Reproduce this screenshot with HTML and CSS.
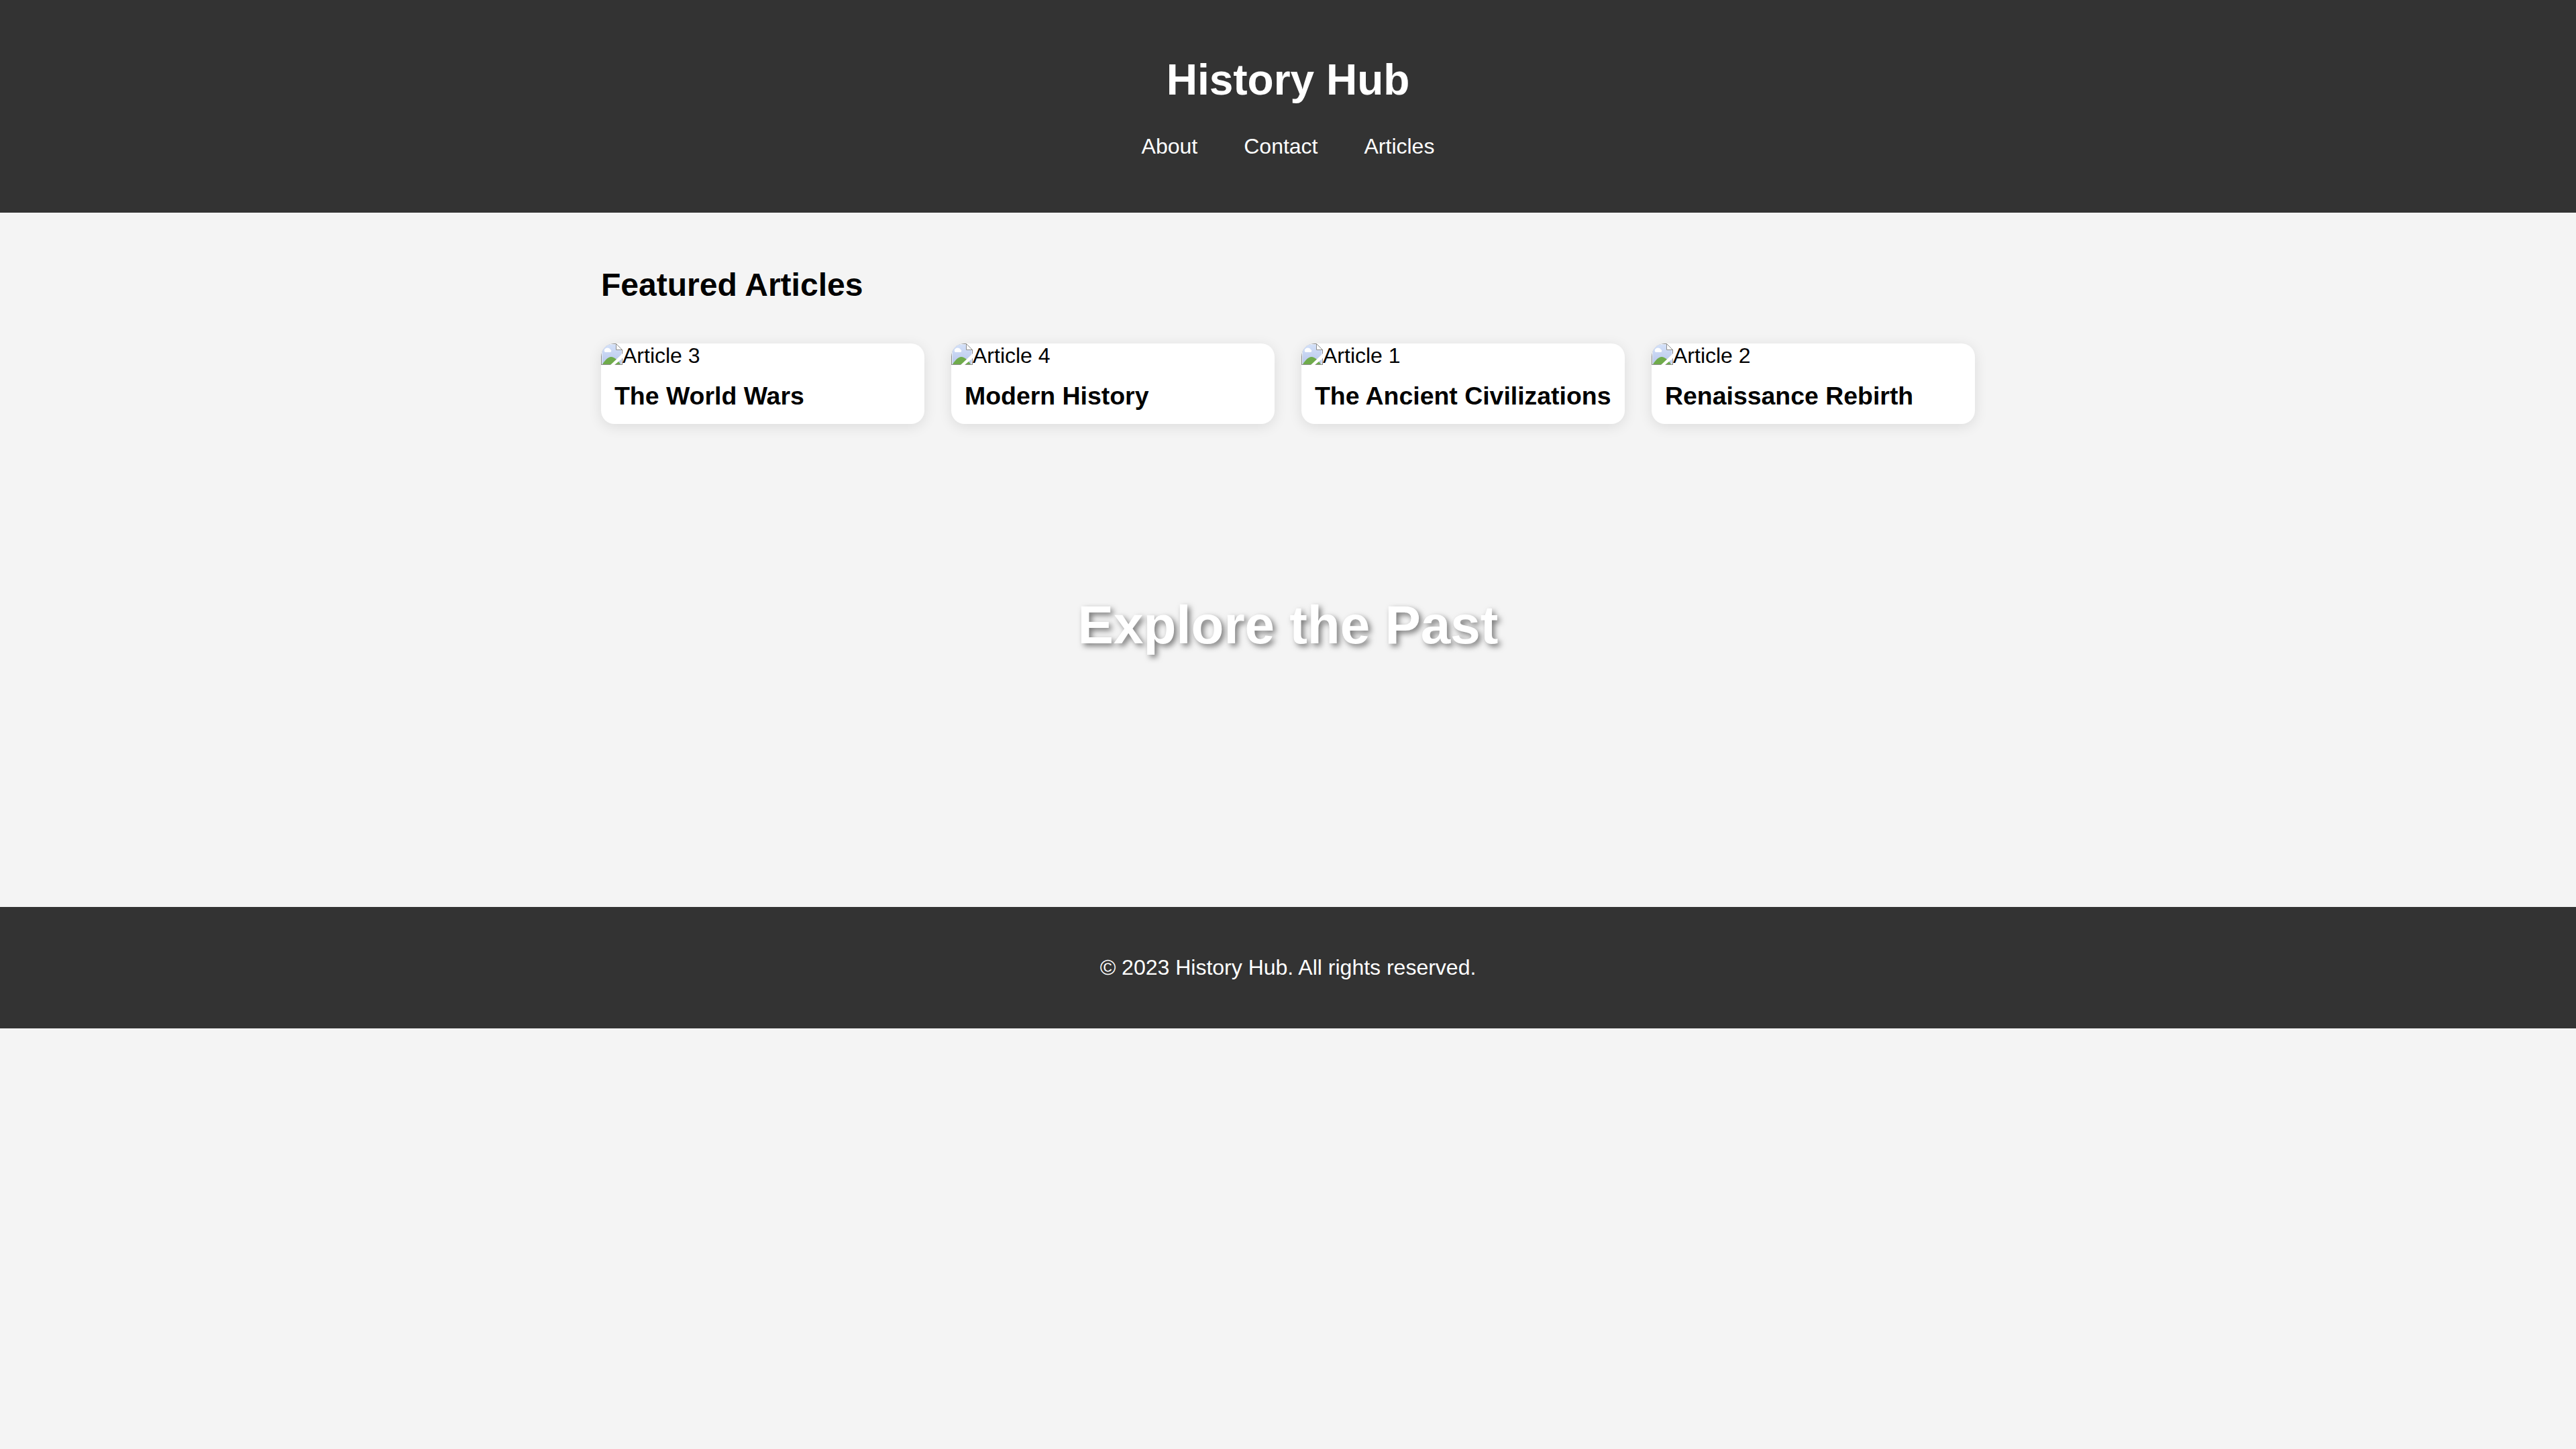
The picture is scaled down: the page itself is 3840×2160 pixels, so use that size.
FILE: index.html
```html
<!DOCTYPE html>
<html lang="en">
<head>
<meta charset="utf-8">
<meta name="viewport" content="width=device-width, initial-scale=1">
<title>History Hub</title>
<link rel="stylesheet" href="styles.css">
</head>
<body>
<svg class="defs" aria-hidden="true">
  <defs>
    <linearGradient id="sky" x1="0" y1="0" x2="0" y2="1">
      <stop offset="0" stop-color="#d3e0f8"/>
      <stop offset="1" stop-color="#b9c8ec"/>
    </linearGradient>
    <symbol id="picture" viewBox="0 0 32 32">
      <path d="M0 0H23L32 9V32H0Z" fill="#8c8c8c"/>
      <path d="M1 1H22L31 10V31H1Z" fill="#e6edfb"/>
      <path d="M2 2H22V10H30V30H2Z" fill="url(#sky)"/>
      <path d="M2 31C6 25 10 20 15 20C20 20 25 25 29 31Z" fill="#6fab4b"/>
      <path d="M6 13A3 3 0 0 1 5.500 8.500A5 4.500 0 0 1 14 9A2.200 2.200 0 0 1 14 13Z" fill="#fff"/>
      <path d="M22 0V9H32V0Z" fill="#fff"/>
      <path d="M22.500 .5V9.500H31.500M22.500 .5L31.500 9.500" fill="none" stroke="#8c8c8c"/>
      <path d="M14 32L32 15V22L20 32Z" fill="#fff"/>
    </symbol>
  </defs>
</svg>
<header class="site-header">
  <h1 class="site-title">History Hub</h1>
  <nav class="site-nav">
    <a href="#about">About</a>
    <a href="#contact">Contact</a>
    <a href="#articles">Articles</a>
  </nav>
</header>
<main>
  <section class="featured" id="articles">
    <h2 class="featured-title">Featured Articles</h2>
    <div class="cards">
      <article class="card">
        <div class="card-image"><svg class="icon" aria-hidden="true"><use href="#picture"/></svg><span>Article 3</span></div>
        <h3 class="card-title">The World Wars</h3>
      </article>
      <article class="card">
        <div class="card-image"><svg class="icon" aria-hidden="true"><use href="#picture"/></svg><span>Article 4</span></div>
        <h3 class="card-title">Modern History</h3>
      </article>
      <article class="card">
        <div class="card-image"><svg class="icon" aria-hidden="true"><use href="#picture"/></svg><span>Article 1</span></div>
        <h3 class="card-title">The Ancient Civilizations</h3>
      </article>
      <article class="card">
        <div class="card-image"><svg class="icon" aria-hidden="true"><use href="#picture"/></svg><span>Article 2</span></div>
        <h3 class="card-title">Renaissance Rebirth</h3>
      </article>
    </div>
  </section>
  <section class="hero">
    <h2 class="hero-title">Explore the Past</h2>
  </section>
</main>
<footer class="site-footer">
  <p class="copyright">© 2023 History Hub. All rights reserved.</p>
</footer>
</body>
</html>
```
FILE: styles.css
```css
* {
  box-sizing: border-box;
}

body {
  margin: 0;
  background: #f4f4f4;
  color: #000;
  font-family: "Liberation Sans", Arial, sans-serif;
  font-size: 32px;
}

.defs {
  display: block;
  width: 0;
  height: 0;
}

.site-header {
  padding: 83px 40px 80px;
  background: #333;
  color: #fff;
  text-align: center;
}

.site-title {
  margin: 0 0 44px;
  font-size: 64px;
  line-height: 73px;
}

.site-nav {
  display: flex;
  justify-content: center;
  gap: 69px;
  line-height: 37px;
}

.site-nav a {
  color: inherit;
  text-decoration: none;
}

.featured {
  max-width: 2128px;
  margin: 0 auto;
  padding: 80px 40px 0;
}

.featured-title {
  margin: 0 0 60px;
  font-size: 48px;
  line-height: 55px;
}

.cards {
  display: grid;
  grid-template-columns: repeat(auto-fit, minmax(440px, 1fr));
  gap: 40px;
}

.card {
  overflow: hidden;
  border-radius: 20px;
  background: #fff;
  box-shadow: 0 4px 20px rgba(0, 0, 0, 0.1);
}

.card-image {
  display: flex;
  align-items: flex-start;
  line-height: 37px;
}

.icon {
  flex: none;
  width: 32px;
  height: 32px;
}

.card-title {
  margin: 0;
  padding: 20px;
  line-height: 43px;
}

.hero {
  display: flex;
  align-items: center;
  justify-content: center;
  min-height: 600px;
  margin-bottom: 120px;
}

.hero-title {
  margin: 0;
  color: #fff;
  font-size: 80px;
  line-height: 92px;
  text-shadow: 4px 4px 8px rgba(0, 0, 0, 0.5);
}

.site-footer {
  padding: 40px;
  background: #333;
  color: #fff;
  text-align: center;
}

.copyright {
  margin: 32px 0;
  line-height: 37px;
}
```
